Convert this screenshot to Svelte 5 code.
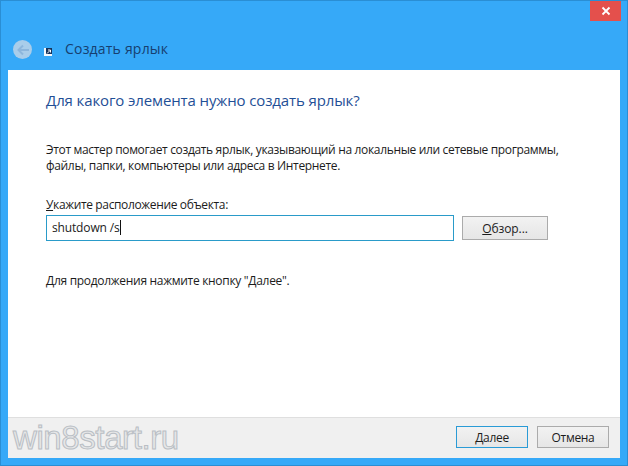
<script lang="ts">
	let path = $state('shutdown /s');
</script>

<div class="window">
	<div class="close" aria-label="Закрыть">
		<svg width="10" height="10" viewBox="0 0 10 10"><path d="M1.5 1.5l7 7M8.5 1.5l-7 7" stroke="#fff" stroke-width="1.8" fill="none" /></svg>
	</div>

	<header class="head">
		<span class="back">
			<svg width="18" height="18" viewBox="0 0 18 18"><path d="M15 9H4.5M9 4.5L4.5 9 9 13.5" stroke="#8db6dc" stroke-width="2" fill="none" /></svg>
		</span>
		<span class="shortcut">
			<svg width="8" height="8" viewBox="0 0 8 8"><rect width="8" height="8" fill="#f4f8fc" /><rect x="2" y="0" width="6" height="6" fill="#16335c" /><path d="M3 5.5L6 2.5M4 2h2.5v2.5" stroke="#fff" stroke-width="1" fill="none" /></svg>
		</span>
		<h1>Создать ярлык</h1>
	</header>

	<main class="page">
		<section class="body">
			<h2>Для какого элемента нужно создать ярлык?</h2>
			<p class="intro">Этот мастер помогает создать ярлык, указывающий на локальные или сетевые программы, файлы, папки, компьютеры или адреса в Интернете.</p>
			<label for="path"><u>У</u>кажите расположение объекта:</label>
			<div class="row">
				<div class="field" id="path">{path}<i class="caret"></i></div>
				<button class="btn browse"><u>О</u>бзор...</button>
			</div>
			<p class="hint">Для продолжения нажмите кнопку "Далее".</p>
		</section>
		<footer class="foot">
			<span class="mark">win8start.ru</span>
			<button class="btn primary"><u>Д</u>алее</button>
			<button class="btn">Отмена</button>
		</footer>
	</main>
</div>

<style>
	:global(body) {
		margin: 0;
	}
	.window {
		position: relative;
		box-sizing: border-box;
		width: 628px;
		height: 466px;
		display: flex;
		flex-direction: column;
		padding: 0 8px 8px 8px;
		background: #36a9f8;
		box-shadow: inset 0 0 0 1px #2a8ed4;
		font-family: 'Open Sans', 'Noto Sans', sans-serif;
		font-size: 12px;
		letter-spacing: -0.3px;
		color: #1c1c1c;
	}
	.close {
		position: absolute;
		top: 1px;
		right: 7px;
		width: 31px;
		height: 20px;
		display: flex;
		align-items: center;
		justify-content: center;
		background: #e4504c;
	}
	.head {
		height: 70px;
		flex: none;
		display: flex;
		align-items: flex-end;
		box-sizing: border-box;
		padding: 0 0 11px 5px;
	}
	.back {
		width: 19px;
		height: 19px;
		border-radius: 50%;
		background: #a9cdea;
		display: flex;
		align-items: center;
		justify-content: center;
	}
	.shortcut {
		margin: 0 0 3px 12px;
		display: flex;
	}
	.head h1 {
		margin: 0 0 1px 13px;
		font-size: 14px;
		font-weight: 400;
		line-height: 19px;
		letter-spacing: 0.2px;
		color: #173f70;
	}
	.page {
		flex: 1;
		display: flex;
		flex-direction: column;
		background: #fff;
	}
	.body {
		flex: 1;
		padding: 0 38px;
	}
	h2 {
		margin: 19px 0 0;
		font-size: 15px;
		font-weight: 400;
		line-height: 22px;
		letter-spacing: -0.12px;
		color: #1f4f96;
	}
	.intro {
		margin: 31px 0 0;
		width: 530px;
		line-height: 16px;
		letter-spacing: -0.34px;
	}
	label {
		display: block;
		margin-top: 23px;
		line-height: 16px;
		letter-spacing: -0.36px;
	}
	.row {
		display: flex;
		align-items: center;
		gap: 8px;
		margin-top: 2px;
	}
	.field {
		box-sizing: border-box;
		width: 408px;
		height: 26px;
		padding: 0 0 2px 5px;
		display: flex;
		align-items: center;
		border: 1px solid #2a9bc9;
		letter-spacing: -0.15px;
	}
	.caret {
		width: 1px;
		height: 15px;
		background: #111;
	}
	.btn {
		box-sizing: border-box;
		width: 72px;
		height: 22px;
		padding: 0;
		border: 1px solid #ababab;
		background: linear-gradient(#f2f2f2, #e6e6e6);
		font: inherit;
		letter-spacing: inherit;
		color: #1c1c1c;
	}
	.browse {
		width: 86px;
		height: 24px;
		letter-spacing: -0.1px;
	}
	.hint {
		margin: 32px 0 0;
		line-height: 16px;
	}
	.foot {
		flex: none;
		height: 41px;
		box-sizing: border-box;
		display: flex;
		align-items: center;
		justify-content: flex-end;
		gap: 9px;
		padding: 0 11px 2px 0;
		background: #f0f0f0;
		border-top: 1px solid #dfdfdf;
	}
	.primary {
		border-color: #2a9bd6;
	}
	.mark {
		margin-right: auto;
		margin-left: 5px;
		font-family: 'Liberation Sans', sans-serif;
		font-size: 33px;
		line-height: 33px;
		letter-spacing: -0.4px;
		color: #e6e7e8;
		-webkit-text-stroke: 1px #b9bec4;
	}
</style>
